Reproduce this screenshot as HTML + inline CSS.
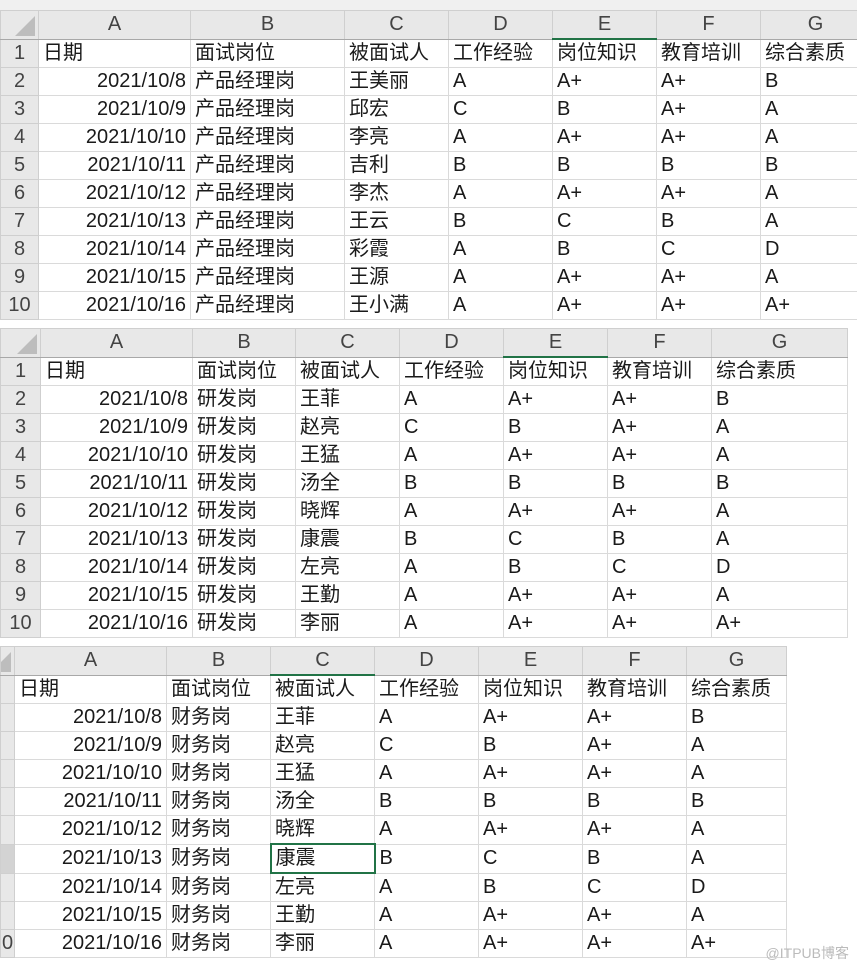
<!DOCTYPE html>
<html><head><meta charset="utf-8"><style>
body{margin:0;width:857px;height:971px;background:#fff;position:relative;overflow:hidden;font-family:"Liberation Sans","Noto Sans CJK SC",sans-serif;}
.t{position:absolute;border-collapse:collapse;table-layout:fixed;font-size:20px;color:#1a1a1a;}
.t td{height:27px;border:1px solid #dadada;padding:0 4px;white-space:nowrap;overflow:hidden;line-height:27px;}
.t tr.h td{background:#e8e8e8;color:#444;text-align:center;border-color:#cfcfcf;border-bottom:1px solid #a8a8a8;}
.t td.rh{background:#e8e8e8;color:#444;text-align:center;border-color:#cfcfcf;padding:0;}
.t td.sel{background:#d3d3d3;color:#217346;border-bottom:2px solid #217346!important;}
.t td.r{text-align:right;}
.corner{position:relative;}
.corner:after{content:"";position:absolute;right:3px;bottom:3px;border-left:20px solid transparent;border-bottom:20px solid #bdbdbd;}
.wm{position:absolute;right:8px;bottom:8px;color:#bbb;font-size:14px;}
</style></head><body>
<div style="position:absolute;left:0;top:0;width:857px;height:10px;background:#f0f0f0"></div>
<table class="t" style="left:0;top:10px;width:870px">
<colgroup><col style="width:38px"><col style="width:152px"><col style="width:154px"><col style="width:104px"><col style="width:104px"><col style="width:104px"><col style="width:104px"><col style="width:110px"></colgroup>
<tr class="h"><td class="corner"></td><td>A</td><td>B</td><td>C</td><td>D</td><td class="sel">E</td><td>F</td><td>G</td></tr>
<tr><td class="rh">1</td><td>日期</td><td>面试岗位</td><td>被面试人</td><td>工作经验</td><td>岗位知识</td><td>教育培训</td><td>综合素质</td></tr>
<tr><td class="rh">2</td><td class="r">2021/10/8</td><td>产品经理岗</td><td>王美丽</td><td>A</td><td>A+</td><td>A+</td><td>B</td></tr>
<tr><td class="rh">3</td><td class="r">2021/10/9</td><td>产品经理岗</td><td>邱宏</td><td>C</td><td>B</td><td>A+</td><td>A</td></tr>
<tr><td class="rh">4</td><td class="r">2021/10/10</td><td>产品经理岗</td><td>李亮</td><td>A</td><td>A+</td><td>A+</td><td>A</td></tr>
<tr><td class="rh">5</td><td class="r">2021/10/11</td><td>产品经理岗</td><td>吉利</td><td>B</td><td>B</td><td>B</td><td>B</td></tr>
<tr><td class="rh">6</td><td class="r">2021/10/12</td><td>产品经理岗</td><td>李杰</td><td>A</td><td>A+</td><td>A+</td><td>A</td></tr>
<tr><td class="rh">7</td><td class="r">2021/10/13</td><td>产品经理岗</td><td>王云</td><td>B</td><td>C</td><td>B</td><td>A</td></tr>
<tr><td class="rh">8</td><td class="r">2021/10/14</td><td>产品经理岗</td><td>彩霞</td><td>A</td><td>B</td><td>C</td><td>D</td></tr>
<tr><td class="rh">9</td><td class="r">2021/10/15</td><td>产品经理岗</td><td>王源</td><td>A</td><td>A+</td><td>A+</td><td>A</td></tr>
<tr><td class="rh">10</td><td class="r">2021/10/16</td><td>产品经理岗</td><td>王小满</td><td>A</td><td>A+</td><td>A+</td><td>A+</td></tr>
</table>
<div style="position:absolute;left:0;top:320px;width:857px;height:6px;background:#fff"></div>
<table class="t" style="left:0;top:328px;width:847px">
<colgroup><col style="width:40px"><col style="width:152px"><col style="width:103px"><col style="width:104px"><col style="width:104px"><col style="width:104px"><col style="width:104px"><col style="width:136px"></colgroup>
<tr class="h"><td class="corner"></td><td>A</td><td>B</td><td>C</td><td>D</td><td class="sel">E</td><td>F</td><td>G</td></tr>
<tr><td class="rh">1</td><td>日期</td><td>面试岗位</td><td>被面试人</td><td>工作经验</td><td>岗位知识</td><td>教育培训</td><td>综合素质</td></tr>
<tr><td class="rh">2</td><td class="r">2021/10/8</td><td>研发岗</td><td>王菲</td><td>A</td><td>A+</td><td>A+</td><td>B</td></tr>
<tr><td class="rh">3</td><td class="r">2021/10/9</td><td>研发岗</td><td>赵亮</td><td>C</td><td>B</td><td>A+</td><td>A</td></tr>
<tr><td class="rh">4</td><td class="r">2021/10/10</td><td>研发岗</td><td>王猛</td><td>A</td><td>A+</td><td>A+</td><td>A</td></tr>
<tr><td class="rh">5</td><td class="r">2021/10/11</td><td>研发岗</td><td>汤全</td><td>B</td><td>B</td><td>B</td><td>B</td></tr>
<tr><td class="rh">6</td><td class="r">2021/10/12</td><td>研发岗</td><td>晓辉</td><td>A</td><td>A+</td><td>A+</td><td>A</td></tr>
<tr><td class="rh">7</td><td class="r">2021/10/13</td><td>研发岗</td><td>康震</td><td>B</td><td>C</td><td>B</td><td>A</td></tr>
<tr><td class="rh">8</td><td class="r">2021/10/14</td><td>研发岗</td><td>左亮</td><td>A</td><td>B</td><td>C</td><td>D</td></tr>
<tr><td class="rh">9</td><td class="r">2021/10/15</td><td>研发岗</td><td>王勤</td><td>A</td><td>A+</td><td>A+</td><td>A</td></tr>
<tr><td class="rh">10</td><td class="r">2021/10/16</td><td>研发岗</td><td>李丽</td><td>A</td><td>A+</td><td>A+</td><td>A+</td></tr>
</table>
<div style="position:absolute;left:0;top:638px;width:857px;height:6px;background:#fff"></div>
<table class="t" style="left:0;top:646px;width:786px">
<colgroup><col style="width:14px"><col style="width:152px"><col style="width:104px"><col style="width:104px"><col style="width:104px"><col style="width:104px"><col style="width:104px"><col style="width:100px"></colgroup>
<tr class="h"><td class="corner"></td><td>A</td><td>B</td><td class="sel">C</td><td>D</td><td>E</td><td>F</td><td>G</td></tr>
<tr><td class="rh"></td><td>日期</td><td>面试岗位</td><td>被面试人</td><td>工作经验</td><td>岗位知识</td><td>教育培训</td><td>综合素质</td></tr>
<tr><td class="rh"></td><td class="r">2021/10/8</td><td>财务岗</td><td>王菲</td><td>A</td><td>A+</td><td>A+</td><td>B</td></tr>
<tr><td class="rh"></td><td class="r">2021/10/9</td><td>财务岗</td><td>赵亮</td><td>C</td><td>B</td><td>A+</td><td>A</td></tr>
<tr><td class="rh"></td><td class="r">2021/10/10</td><td>财务岗</td><td>王猛</td><td>A</td><td>A+</td><td>A+</td><td>A</td></tr>
<tr><td class="rh"></td><td class="r">2021/10/11</td><td>财务岗</td><td>汤全</td><td>B</td><td>B</td><td>B</td><td>B</td></tr>
<tr><td class="rh"></td><td class="r">2021/10/12</td><td>财务岗</td><td>晓辉</td><td>A</td><td>A+</td><td>A+</td><td>A</td></tr>
<tr><td class="rh" style="background:#d3d3d3"></td><td class="r">2021/10/13</td><td>财务岗</td><td style="border:2px solid #217346">康震</td><td>B</td><td>C</td><td>B</td><td>A</td></tr>
<tr><td class="rh"></td><td class="r">2021/10/14</td><td>财务岗</td><td>左亮</td><td>A</td><td>B</td><td>C</td><td>D</td></tr>
<tr><td class="rh"></td><td class="r">2021/10/15</td><td>财务岗</td><td>王勤</td><td>A</td><td>A+</td><td>A+</td><td>A</td></tr>
<tr><td class="rh">0</td><td class="r">2021/10/16</td><td>财务岗</td><td>李丽</td><td>A</td><td>A+</td><td>A+</td><td>A+</td></tr>
</table>
<div class="wm">@ITPUB博客</div>
</body></html>
